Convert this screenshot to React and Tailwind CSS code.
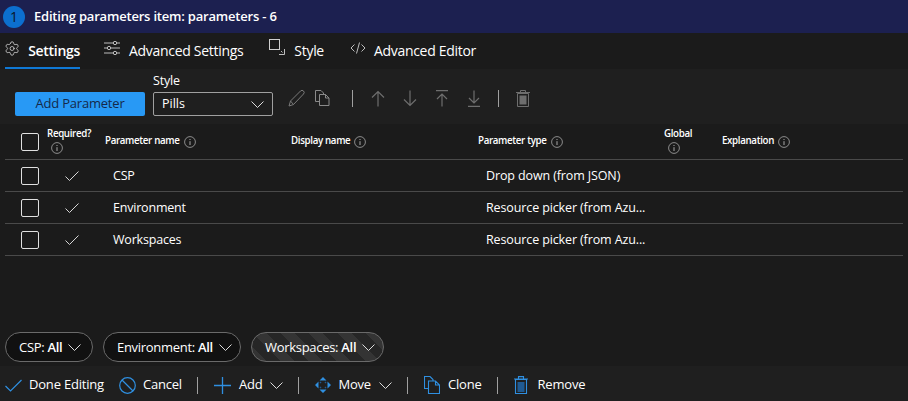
import { Settings } from "lucide-react";

const font = { fontFamily: '"Open Sans", "Noto Sans", sans-serif' };

function Info({ className = "" }) {
  return (
    <svg width="12" height="12" viewBox="0 0 12 12" fill="none" stroke="#a8a8a8" className={`shrink-0 ${className}`}>
      <circle cx="6" cy="6" r="5.4" strokeWidth="0.8" />
      <path d="M6 5.2V9M6 3v1" strokeWidth="1" />
    </svg>
  );
}

function Chev({ className = "" }) {
  return (
    <svg width="13" height="7" viewBox="0 0 13 7" fill="none" stroke="#dcdcdc" strokeWidth="1" className={`shrink-0 ${className}`}>
      <path d="M.5.5l6 6 6-6" />
    </svg>
  );
}

function Check() {
  return (
    <svg width="14" height="10" viewBox="0 0 14 10" fill="none" stroke="#d6d6d6" strokeWidth="1">
      <path d="M.5 5.5l4 4 9-9" />
    </svg>
  );
}

function Box() {
  return <div className="h-[18px] w-[18px] rounded-[2px] border border-[#e0e0e0]" />;
}

function Divider({ className = "" }) {
  return <div className={`h-[17px] w-px bg-[#a0a0a0] ${className}`} />;
}

const rows = [
  { name: "CSP", type: "Drop down (from JSON)" },
  { name: "Environment", type: "Resource picker (from Azu..." },
  { name: "Workspaces", type: "Resource picker (from Azu..." },
];

function Tab({ icon, label, active, className = "" }) {
  return (
    <div className={`flex h-[36px] items-center border-b-2 ${active ? "border-[#0f78d4] font-semibold" : "border-transparent"} ${className}`}>
      {icon}
      <span className="text-[14px] tracking-[-0.3px] text-white">{label}</span>
    </div>
  );
}

function Pill({ label, value, striped, className = "" }) {
  return (
    <div
      className={`flex h-[30px] items-center rounded-full border border-[#6a6a6a] pt-[1px] text-[13px] tracking-[-0.3px] text-white ${
        striped
          ? "bg-[repeating-linear-gradient(45deg,#343434_0,#343434_10px,#262626_10px,#262626_20px)]"
          : "bg-[#111111]"
      } ${className}`}
    >
      <span>{label}:&nbsp;</span>
      <span className="font-semibold">{value}</span>
      <Chev className="ml-[6px]" />
    </div>
  );
}

export default function App() {
  return (
    <div style={font} className="flex h-[401px] w-[908px] flex-col overflow-hidden bg-[#1b1b1b] text-white">
      {/* header */}
      <div className="flex h-[33px] items-center bg-[#1c2050] pl-[3px]">
        <div className="flex h-[22px] w-[22px] items-center justify-center rounded-full bg-[#0c6fcf] text-[14px] text-[#0a1428]">1</div>
        <span className="ml-[9px] text-[13px] font-semibold tracking-[-0.2px]">Editing parameters item: parameters - 6</span>
      </div>

      {/* tabs */}
      <div className="flex h-[36px] pl-[5px]">
        <Tab
          active
          label="Settings"
          className="w-[75px]"
          icon={<Settings size={17} strokeWidth={1.1} color="#e0e0e0" className="mr-[8px] -ml-[1px] -translate-y-[2px]" />}
        />
        <Tab
          label="Advanced Settings"
          className="ml-[24px]"
          icon={
            <svg width="16" height="14" viewBox="0 0 16 14" fill="none" stroke="#d0d0d0" strokeWidth="0.9" className="mr-[9px] -translate-y-[2px]">
              <path d="M0 2h9M13 2h3M0 7h3M7 7h9M0 12h9M13 12h3" />
              <circle cx="11" cy="2" r="1.7" />
              <circle cx="5" cy="7" r="1.7" />
              <circle cx="11" cy="12" r="1.7" />
            </svg>
          }
        />
        <Tab
          label="Style"
          className="ml-[26px]"
          icon={
            <svg width="16" height="16" viewBox="0 0 16 16" fill="none" stroke="#d0d0d0" className="mr-[9px] -translate-y-[3px]">
              <rect x="0.5" y="0.5" width="10" height="10" strokeWidth="1" />
              <path d="M15.5 10v5.5H10M12 12l1.5 1.5" strokeWidth="0.9" />
            </svg>
          }
        />
        <Tab
          label="Advanced Editor"
          className="ml-[26px]"
          icon={
            <svg width="16" height="12" viewBox="0 0 16 12" fill="none" stroke="#d0d0d0" strokeWidth="0.9" className="mr-[8px] -translate-y-[2px]">
              <path d="M4.5 2.5 1 6l3.5 3.5M11.5 2.5 15 6l-3.5 3.5M9.5.5l-3 11" />
            </svg>
          }
        />
      </div>

      {/* parameter toolbar */}
      <div className="flex h-[55px] items-start bg-[#1f1f1f] pl-[15px]">
        <button className="mt-[23px] h-[24px] w-[130px] rounded-[2px] bg-[#2899f5] text-[13px] tracking-[-0.2px] text-[#15294a]">Add Parameter</button>
        <div className="ml-[8px] w-[120px]">
          <div className="mt-[3px] h-[20px] text-[12.5px] leading-[18px] tracking-[-0.2px]">Style</div>
          <div className="flex h-[24px] items-center justify-between rounded-[2px] border border-[#a0a0a0] pl-[8px] pr-[8px] pt-[1px] text-[12.5px]">
            <span>Pills</span>
            <Chev />
          </div>
        </div>
        <div className="mt-[20px] ml-[15px] flex items-center">
          <svg width="17" height="18" viewBox="0 0 17 18" fill="none" stroke="#7a7a7a" strokeWidth="1">
            <path d="M1 17l1.500-5L12.500 2a2.100 2.100 0 0 1 3 3L5.500 15.500zM2.500 12l3 3.500" />
          </svg>
          <svg width="15" height="16" viewBox="0 0 15 16" fill="none" stroke="#8a8a8a" strokeWidth="1" className="ml-[10px]">
            <path d="M4 11.500H.5V.5H6L8.500 3v1.500M4.500 4.500h6l3.500 3.500v7.500H4.500zM10.500 4.500V8H14" />
          </svg>
          <Divider className="ml-[22px]" />
          <svg width="14" height="17" viewBox="0 0 14 17" fill="none" stroke="#6e6e6e" strokeWidth="1.2" className="ml-[18px]">
            <path d="M7 16.500V1.500M1 7.500l6-6 6 6" />
          </svg>
          <svg width="14" height="17" viewBox="0 0 14 17" fill="none" stroke="#6e6e6e" strokeWidth="1.2" className="ml-[18px]">
            <path d="M7 .5v15M1 9.500l6 6 6-6" />
          </svg>
          <svg width="14" height="17" viewBox="0 0 14 17" fill="none" stroke="#6e6e6e" strokeWidth="1.2" className="ml-[18px]">
            <path d="M1 .6h12M7 16.500V4M2 9l5-5 5 5" />
          </svg>
          <svg width="14" height="17" viewBox="0 0 14 17" fill="none" stroke="#6e6e6e" strokeWidth="1.2" className="ml-[18px]">
            <path d="M1 16.400h12M7 .5V13M2 8l5 5 5-5" />
          </svg>
          <Divider className="ml-[17px]" />
          <svg width="14" height="17" viewBox="0 0 14 17" fill="none" stroke="#6e6e6e" strokeWidth="1" className="ml-[17px]">
            <path d="M1.500 3.500h11v13h-11zM0 2.500h14M4.500 2.500v-2h5v2" />
            <rect x="3.500" y="5.500" width="7" height="9" fill="#6e6e6e" stroke="none" />
          </svg>
        </div>
      </div>

      {/* table */}
      <div className="px-[5px]">
        <div className="grid h-[36px] grid-cols-[42px_58px_186px_187px_186px_58px_1fr] items-center border-b border-[#4a4a4a] text-[9.75px] font-semibold tracking-[-0.35px]">
          <div className="pl-[16px]"><Box /></div>
          <div className="-mt-[2px] leading-[13px]">
            <div>Required?</div>
            <Info className="mt-[2px] ml-[4px]" />
          </div>
          <div className="flex items-center gap-[4px]">Parameter name <Info /></div>
          <div className="flex items-center gap-[4px]">Display name <Info /></div>
          <div className="flex items-center gap-[4px]">Parameter type <Info /></div>
          <div className="-mt-[2px] leading-[13px]">
            <div>Global</div>
            <Info className="mt-[2px] ml-[4px]" />
          </div>
          <div className="flex items-center gap-[4px]">Explanation <Info /></div>
        </div>
        {rows.map((row) => (
          <div key={row.name} className="grid h-[32px] grid-cols-[42px_58px_186px_187px_186px_58px_1fr] items-center border-b border-[#4a4a4a] pt-[1px] text-[12.5px] tracking-[-0.2px]">
            <div className="-mt-[1px] pl-[16px]"><Box /></div>
            <div className="pl-[18px]"><Check /></div>
            <div className="pl-[8px]">{row.name}</div>
            <div />
            <div className="whitespace-nowrap pl-[8px] tracking-[-0.12px]">{row.type}</div>
          </div>
        ))}
      </div>

      {/* pills */}
      <div className="mt-[76px] flex gap-[10px] pl-[5px]">
        <Pill label="CSP" value="All" className="w-[88px] pl-[13px]" />
        <Pill label="Environment" value="All" className="w-[138px] pl-[13px]" />
        <Pill label="Workspaces" value="All" striped className="w-[133px] pl-[13px]" />
      </div>

      {/* bottom bar */}
      <div className="mt-[4px] flex h-[35px] flex-1 items-center bg-[#1f1f1f] pl-[5px] pt-[3px] text-[13px] tracking-[-0.2px]">
        <svg width="17" height="13" viewBox="0 0 17 13" fill="none" stroke="#2f8fe0" strokeWidth="1.2">
          <path d="M.5 7l5 5L16.500 1" />
        </svg>
        <span className="ml-[7px]">Done Editing</span>
        <svg width="17" height="17" viewBox="0 0 17 17" fill="none" stroke="#2f8fe0" strokeWidth="1.2" className="ml-[15px]">
          <circle cx="8.500" cy="8.500" r="7.800" />
          <path d="M3 3l11 11" />
        </svg>
        <span className="ml-[7px]">Cancel</span>
        <Divider className="ml-[15px]" />
        <svg width="17" height="17" viewBox="0 0 17 17" fill="none" stroke="#2f8fe0" strokeWidth="1.3" className="ml-[16px]">
          <path d="M8.500 0v17M0 8.500h17" />
        </svg>
        <span className="ml-[8px]">Add</span>
        <Chev className="ml-[8px]" />
        <Divider className="ml-[15px]" />
        <svg width="16" height="16" viewBox="0 0 16 16" fill="#2f8fe0" className="ml-[16px]">
          <path d="M8 0l3.500 3.500h-7zM8 16l-3.500-3.500h7zM0 8l3.500-3.500v7zM16 8l-3.500 3.500v-7z" />
          <path d="M6 5l-1 1M10 5l1 1M6 11l-1-1M10 11l1-1" stroke="#1f5a92" strokeWidth="1.5" />
        </svg>
        <span className="ml-[7px]">Move</span>
        <Chev className="ml-[8px]" />
        <Divider className="ml-[15px]" />
        <svg width="16" height="18" viewBox="0 0 16 18" fill="none" stroke="#2f8fe0" strokeWidth="1.1" className="ml-[16px]">
          <path d="M4.500 12.500h-4V.5H6L9 3.500V5M4.500 5h7l4 4v8.500h-11zM11.500 5v4h4" />
        </svg>
        <span className="ml-[8px]">Clone</span>
        <Divider className="ml-[15px]" />
        <svg width="14" height="18" viewBox="0 0 14 18" fill="none" stroke="#2f8fe0" strokeWidth="1.1" className="ml-[16px]">
          <path d="M1.500 3.500h11v14h-11zM0 3h14M4.500 3V.6h5V3" />
          <rect x="3.500" y="6" width="7" height="10" fill="#1f5a92" stroke="none" />
        </svg>
        <span className="ml-[10px]">Remove</span>
      </div>
    </div>
  );
}
